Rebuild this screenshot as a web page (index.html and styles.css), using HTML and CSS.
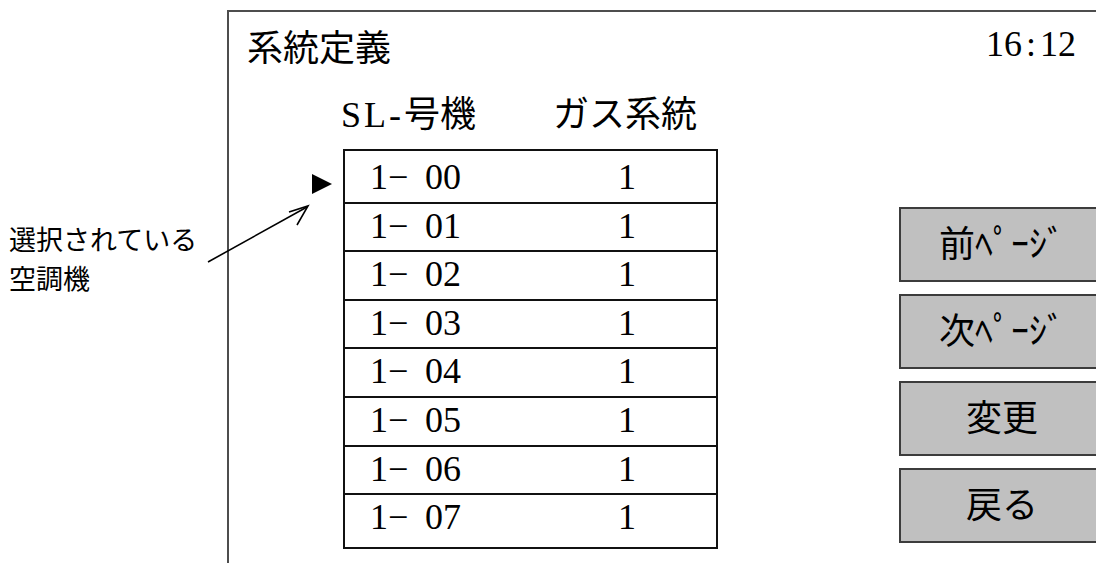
FILE: index.html
```html
<!DOCTYPE html>
<html lang="ja">
<head>
    <meta charset="UTF-8">
    <meta name="viewport" content="width=device-width, initial-scale=1.0">
    <title>系統定義</title>
    <link rel="stylesheet" href="styles.css">
</head>
<body>

<!-- callout pointing at the selected unit -->
<p class="note-text">選択されている<br>空調機</p>
<svg class="note-arrow" width="1096" height="563" viewBox="0 0 1096 563">
    <line x1="208" y1="262" x2="307" y2="207"/>
    <polyline points="289,212 308,206 297,225"/>
</svg>

<div class="screen">
    <div class="screen-head">
        <h1 class="title">系統定義</h1>
        <div class="clock">16<span class="colon">:</span>12</div>
    </div>

    <div class="screen-body">
        <div class="list-area">
            <div class="list-head">
                <span><span class="prefix">SL-</span>号機</span>
                <span>ガス系統</span>
            </div>
            <div class="unit-list">
                <div class="unit-row selected">
                    <svg class="cursor" width="20" height="20" viewBox="0 0 20 20"><polygon points="0,0 20,10 0,20"/></svg>
                    <span><span class="unit-no">1−</span>00</span><span>1</span>
                </div>
                <div class="unit-row"><span><span class="unit-no">1−</span>01</span><span>1</span></div>
                <div class="unit-row"><span><span class="unit-no">1−</span>02</span><span>1</span></div>
                <div class="unit-row"><span><span class="unit-no">1−</span>03</span><span>1</span></div>
                <div class="unit-row"><span><span class="unit-no">1−</span>04</span><span>1</span></div>
                <div class="unit-row"><span><span class="unit-no">1−</span>05</span><span>1</span></div>
                <div class="unit-row"><span><span class="unit-no">1−</span>06</span><span>1</span></div>
                <div class="unit-row"><span><span class="unit-no">1−</span>07</span><span>1</span></div>
            </div>
        </div>

        <div class="side">
            <button class="key">前ﾍﾟｰｼﾞ</button>
            <button class="key">次ﾍﾟｰｼﾞ</button>
            <button class="key">変更</button>
            <button class="key">戻る</button>
        </div>
    </div>
</div>

</body>
</html>
```

FILE: styles.css
```css
body {
    margin: 0;
    padding: 0;
    width: 1096px;
    height: 563px;
    overflow: hidden;
    position: relative;
    background-color: #ffffff;
    color: #000;
    font-family: "Liberation Serif", "Noto Sans CJK JP", serif;
}

.note-text {
    position: absolute;
    left: 9px;
    top: 219px;
    margin: 0;
    font-family: "Noto Sans CJK JP", sans-serif;
    font-size: 27px;
    line-height: 39px;
}

.note-arrow {
    position: absolute;
    left: 0;
    top: 0;
    pointer-events: none;
}

.note-arrow line,
.note-arrow polyline {
    stroke: #000;
    stroke-width: 1.6;
    fill: none;
}

.screen {
    box-sizing: border-box;
    margin-left: 227px;
    margin-top: 10px;
    width: 869px;
    height: 553px;
    overflow: hidden;
    border-top: 2px solid #4d4d4d;
    border-left: 2px solid #4d4d4d;
}

.screen-head {
    display: grid;
    grid-template-columns: 670px 1fr;
    padding-top: 14px;
}

.title {
    margin: 0;
    padding: 5px 0 0 18px;
    font-size: 36px;
    font-weight: normal;
    line-height: 36px;
}

.clock {
    padding-left: 87px;
    font-size: 36px;
    line-height: 36px;
    white-space: nowrap;
}

.colon {
    display: inline-block;
    width: 18px;
    text-align: center;
}

.screen-body {
    display: grid;
    grid-template-columns: 670px 206px;
}

.list-area {
    padding-left: 114px;
}

.list-head {
    display: grid;
    grid-template-columns: 212px auto;
    margin: 30px 0 0 -2px;
    font-size: 36px;
    line-height: 36px;
}

.prefix {
    letter-spacing: 3px;
}

.unit-list {
    margin-top: 16px;
    width: 371px;
    padding: 4px 0 3px;
    border: 2px solid #111;
}

.unit-row {
    position: relative;
    display: grid;
    grid-template-columns: 248px 1fr;
    box-sizing: border-box;
    height: 48.6px;
    padding: 4px 0 0 25px;
    border-bottom: 2px solid #111;
    font-size: 36px;
    line-height: 36px;
}

.unit-row:last-child {
    border-bottom: none;
}

.unit-no {
    display: inline-block;
    width: 55px;
}

.cursor {
    position: absolute;
    left: -33px;
    top: 19px;
}

.side {
    display: flex;
    flex-direction: column;
    gap: 12px;
    padding-top: 140px;
}

.key {
    width: 206px;
    height: 75px;
    padding: 0;
    background-color: #c0c0c0;
    border: 2px solid #3c3c3c;
    border-radius: 0;
    font-family: "Liberation Serif", "Noto Sans CJK JP", serif;
    font-size: 36px;
    line-height: 36px;
    color: #000;
    text-align: center;
}
```
